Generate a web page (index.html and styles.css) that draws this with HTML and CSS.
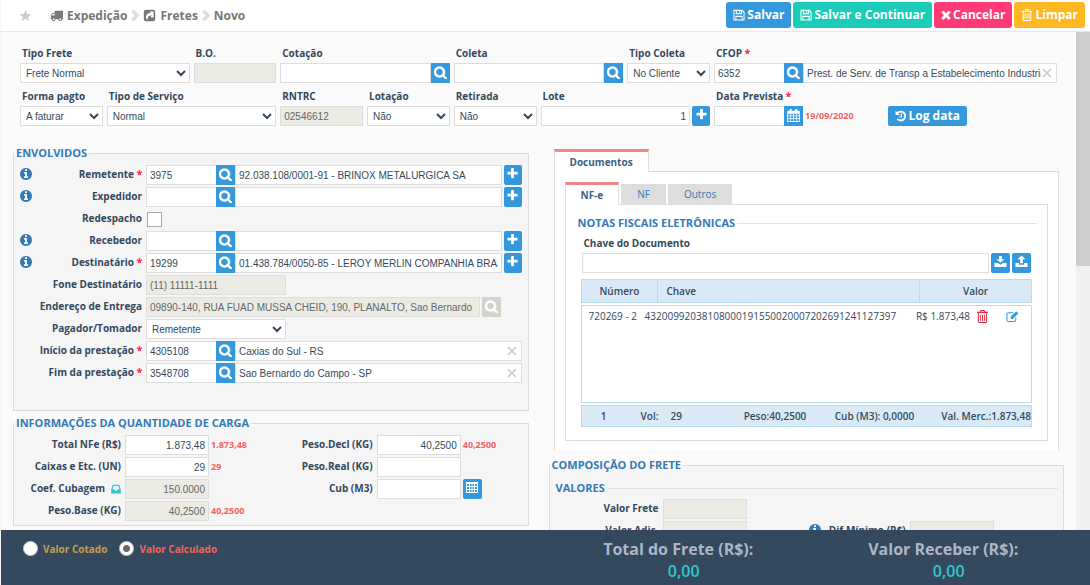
FILE: index.html
```html
<!DOCTYPE html>
<html lang="pt-BR">
<head>
<meta charset="utf-8">
<title>Expedição - Fretes - Novo</title>
<link rel="stylesheet" href="styles.css">
</head>
<body>
<svg class="sprite" aria-hidden="true">
  <symbol id="i-search" viewBox="64 64 1664 1664"><path stroke="currentColor" stroke-width="60" d="M1216 832q0-185-131.500-316.500t-316.500-131.500-316.500 131.500-131.500 316.500 131.500 316.500 316.500 131.500 316.500-131.500 131.500-316.500zm512 832q0 52-38 90t-90 38q-54 0-90-38l-343-342q-179 124-399 124-143 0-273.500-55.500t-225-150-150-225-55.500-273.500 55.500-273.500 150-225 225-150 273.500-55.500 273.500 55.500 225 150 150 225 55.500 273.500q0 220-124 399l343 343q37 37 37 90z"/></symbol>
  <symbol id="i-plus" viewBox="0 0 1792 1792"><path d="M1600 736v192q0 40-28 68t-68 28h-416v416q0 40-28 68t-68 28h-192q-40 0-68-28t-28-68v-416h-416q-40 0-68-28t-28-68v-192q0-40 28-68t68-28h416v-416q0-40 28-68t68-28h192q40 0 68 28t28 68v416h416q40 0 68 28t28 68z"/></symbol>
  <symbol id="i-info" viewBox="128 128 1536 1536"><path d="M1152 1376v-160q0-14-9-23t-23-9h-96v-512q0-14-9-23t-23-9h-320q-14 0-23 9t-9 23v160q0 14 9 23t23 9h96v320h-96q-14 0-23 9t-9 23v160q0 14 9 23t23 9h448q14 0 23-9t9-23zm-128-896v-160q0-14-9-23t-23-9h-192q-14 0-23 9t-9 23v160q0 14 9 23t23 9h192q14 0 23-9t9-23zm640 416q0 209-103 385.500t-279.500 279.500-385.500 103-385.500-103-279.500-279.500-103-385.500 103-385.500 279.500-279.500 385.500-103 385.500 103 279.500 279.500 103 385.500z"/></symbol>
  <symbol id="i-times" viewBox="260 260 1270 1330"><path d="M1490 1322q0 40-28 68l-136 136q-28 28-68 28t-68-28l-294-294-294 294q-28 28-68 28t-68-28l-136-136q-28-28-28-68t28-68l294-294-294-294q-28-28-28-68t28-68l136-136q28-28 68-28t68 28l294 294 294-294q28-28 68-28t68 28l136 136q28 28 28 68t-28 68l-294 294 294 294q28 28 28 68z"/></symbol>
  <symbol id="i-cross" viewBox="0 0 10 10"><path d="M1 1l8 8M9 1l-8 8" fill="none" stroke="currentColor" stroke-width="1.700"/></symbol>
  <symbol id="i-truck" viewBox="0 0 1792 1792"><path d="M640 1408q0-52-38-90t-90-38-90 38-38 90 38 90 90 38 90-38 38-90zm-384-512h384v-256h-158q-13 0-22 9l-195 195q-9 9-9 22v30zm1280 512q0-52-38-90t-90-38-90 38-38 90 38 90 90 38 90-38 38-90zm256-1088v1024q0 15-4 26.500t-13.500 18.500-16.500 11.500-23.500 6-22.500 2-25.500 0-22.500-.5q0 106-75 181t-181 75-181-75-75-181h-384q0 106-75 181t-181 75-181-75-75-181h-64q-3 0-22.500.5t-25.500 0-22.500-2-23.500-6-16.500-11.500-13.500-18.500-4-26.500q0-26 19-45t45-19v-320q0-8-.5-35t0-38 2.500-34.500 6.500-37 14-30.500 22.500-30l198-198q19-19 50.500-32t58.500-13h160v-192q0-26 19-45t45-19h1024q26 0 45 19t19 45z"/></symbol>
  <symbol id="i-star" viewBox="0 0 16 16"><path d="M8 1l2 5 5.500.3-4.300 3.400 1.500 5.300L8 12l-4.700 3 1.500-5.300L.5 6.300 6 6z"/></symbol>
  <symbol id="i-chevron" viewBox="0 0 10 14"><path d="M2.200 2l5 5-5 5" fill="none" stroke="currentColor" stroke-width="3.800"/></symbol>
  <symbol id="i-share" viewBox="0 0 16 16"><path fill-rule="evenodd" d="M3.500 1h9A2.500 2.500 0 0 1 15 3.500v9a2.500 2.500 0 0 1-2.500 2.500h-9A2.500 2.500 0 0 1 1 12.500v-9A2.500 2.500 0 0 1 3.500 1zM8 3l1.600 1.600C5.500 5 3.500 7.600 3.600 10c.1 1.700 1.300 2.800 2.700 3-1.300-2.600.5-5 4.700-5L9.400 9.600l.9.900H13V3z"/></symbol>
  <symbol id="i-save" viewBox="0 0 14 14"><path fill-rule="evenodd" d="M1 1h10l2.500 2.500V13.500H.5V1zM1.700 2.200v10.100h1.100V8h8.400v4.300h1.100V4l-1.800-1.800V6H3.200V2.200zM4.500 2.200v2.600h4.700V2.200zM4 9.200v3.100h6V9.200z"/><path d="M7 2.200h1.400v2H7z"/></symbol>
  <symbol id="i-trash" viewBox="0 0 12 14"><path fill-rule="evenodd" d="M4 0h4l1 2h3v1.300h-1V12.500A1.500 1.500 0 0 1 9.500 14h-7A1.500 1.500 0 0 1 1 12.500V3.300H0V2h3zM4.500 1.100L4.100 2h3.800l-.4-.9zM2.100 3.300v9.500h7.800V3.300zM3.200 5h1v6.500h-1zM5.500 5h1v6.500h-1zM7.800 5h1v6.500h-1z"/></symbol>
  <symbol id="i-history" viewBox="0 0 14 14"><path d="M2.600 3.800A5.200 5.200 0 1 1 2.700 10.400" fill="none" stroke="currentColor" stroke-width="2.200"/><path d="M.6.8v5h5z"/><path d="M7.500 4v3.800H5" fill="none" stroke="currentColor" stroke-width="1.300"/></symbol>
  <symbol id="i-calendar" viewBox="0 0 14 14"><path fill-rule="evenodd" d="M3 0h2v2h4V0h2v2h2a.8.8 0 0 1 .8.8V13.200a.8.8 0 0 1-.8.800H1a.8.8 0 0 1-.8-.8V2.800A.8.8 0 0 1 1 2h2zM1.200 5v2h2.400V5zM4.400 5v2h2.200V5zM7.400 5v2h2.200V5zM10.400 5v2h2.400V5zM1.200 7.800v2h2.400v-2zM4.400 7.800v2h2.200v-2zM7.400 7.800v2h2.200v-2zM10.400 7.800v2h2.400v-2zM1.200 10.600v2.200h2.400v-2.200zM4.400 10.600v2.200h2.200v-2.200zM7.400 10.600v2.200h2.200v-2.200zM10.400 10.600v2.200h2.400v-2.200z"/></symbol>
  <symbol id="i-table" viewBox="0 0 12 11"><path fill-rule="evenodd" d="M0 0h12v11H0zM1 2v2h2V2zM4 2v2h1.600V2zM6.500 2v2H8V2zM9 2v2h2V2zM1 5v2h2V5zM4 5v2h1.600V5zM6.500 5v2H8V5zM9 5v2h2V5zM1 8v2h2V8zM4 8v2h1.600V8zM6.500 8v2H8V8zM9 8v2h2V8z"/></symbol>
  <symbol id="i-download" viewBox="0 0 14 14"><path d="M5.500 1h3v3.500h2.700L7 8.400 2.800 4.500h2.700z"/><path d="M.5 8.500h3.800L7 10.500l2.700-2h3.800V13H.5z"/></symbol>
  <symbol id="i-upload" viewBox="0 0 14 14"><path d="M7 .6l4.300 4.100H8.500V9h-3V4.700H2.700z"/><path d="M.5 8.500h3.700v2h5.600v-2h3.700V13H.5z"/></symbol>
  <symbol id="i-edit" viewBox="0 0 14 14"><path d="M10.500 8v2.800a1.500 1.500 0 0 1-1.500 1.500H2.500A1.500 1.500 0 0 1 1 10.800V4.500A1.500 1.500 0 0 1 2.500 3H8" fill="none" stroke="currentColor" stroke-width="1.100"/><path d="M5 7.300L11 1.300l2.300 2.300-6 6H5z"/></symbol>
  <symbol id="i-inbox" viewBox="0 0 12 12"><path fill-rule="evenodd" d="M2 1h8l1.800 5.500V11.500H.2V6.500zM3 2.400L2 6.700h2.200L5 8.200h2l.8-1.500H10L9 2.400z"/></symbol>
</svg>

<header class="topbar">
  <button class="star" aria-label="Favorito"><svg class="icon"><use href="#i-star"/></svg></button>
  <nav class="crumbs">
    <a href="#"><svg class="icon"><use href="#i-truck"/></svg>Expedição</a>
    <svg class="sep"><use href="#i-chevron"/></svg>
    <a href="#"><svg class="icon"><use href="#i-share"/></svg>Fretes</a>
    <svg class="sep"><use href="#i-chevron"/></svg>
    <span>Novo</span>
  </nav>
  <div class="actions">
    <button class="btn blue"><svg class="icon"><use href="#i-save"/></svg>Salvar</button>
    <button class="btn teal"><svg class="icon"><use href="#i-save"/></svg>Salvar e Continuar</button>
    <button class="btn pink"><svg class="icon small"><use href="#i-times"/></svg>Cancelar</button>
    <button class="btn amber"><svg class="icon"><use href="#i-trash"/></svg>Limpar</button>
  </div>
</header>

<div class="viewport">
<main class="content">
  <form class="head-form">
    <div class="field w2"><label for="tf">Tipo Frete</label><select id="tf"><option>Frete Normal</option></select></div>
    <div class="field"><label for="bo">B.O.</label><input id="bo" disabled></div>
    <div class="field w2"><label for="cot">Cotação</label><div class="group"><input id="cot"><button type="button" class="find" aria-label="Buscar cotação"><svg><use href="#i-search"/></svg></button></div></div>
    <div class="field w2"><label for="col">Coleta</label><div class="group"><input id="col"><button type="button" class="find" aria-label="Buscar coleta"><svg><use href="#i-search"/></svg></button></div></div>
    <div class="field"><label for="tc">Tipo Coleta</label><select id="tc"><option>No Cliente</option></select></div>
    <div class="field w4"><label for="cfop">CFOP <b class="req">*</b></label><div class="group"><input id="cfop" class="code" value="6352"><button type="button" class="find" aria-label="Buscar CFOP"><svg><use href="#i-search"/></svg></button><div class="clearable"><input aria-label="Descrição CFOP" value="Prest. de Serv. de Transp a Estabelecimento Industrialização"><button type="button" class="clear" aria-label="Apagar"><svg><use href="#i-cross"/></svg></button></div></div></div>

    <div class="field"><label for="fp">Forma pagto</label><select id="fp"><option>A faturar</option></select></div>
    <div class="field w2"><label for="ts">Tipo de Serviço</label><select id="ts"><option>Normal</option></select></div>
    <div class="field"><label for="rn">RNTRC</label><input id="rn" value="02546612" disabled></div>
    <div class="field"><label for="lo">Lotação</label><select id="lo"><option>Não</option></select></div>
    <div class="field"><label for="re">Retirada</label><select id="re"><option>Não</option></select></div>
    <div class="field w2"><label for="lt">Lote</label><div class="group"><input id="lt" class="num" value="1"><button type="button" class="add" aria-label="Adicionar lote"><svg><use href="#i-plus"/></svg></button></div></div>
    <div class="field w2"><label for="dp">Data Prevista <b class="req">*</b></label><div class="group"><input id="dp" class="code"><button type="button" class="find" aria-label="Calendário"><svg><use href="#i-calendar"/></svg></button><output class="hint">19/09/2020</output></div></div>
    <div class="field log"><button type="button" class="btn blue"><svg class="icon"><use href="#i-history"/></svg>Log data</button></div>
  </form>

  <div class="columns">
    <div class="left">
      <fieldset class="box parties">
        <legend>ENVOLVIDOS</legend>
        <div class="rows">
        <div class="row"><svg class="info"><use href="#i-info"/></svg><label for="rem">Remetente <b class="req">*</b></label><div class="group"><input id="rem" class="code" value="3975"><button class="find" aria-label="Buscar"><svg><use href="#i-search"/></svg></button><input aria-label="Nome do remetente" value="92.038.108/0001-91 - BRINOX METALURGICA SA"><button class="add" aria-label="Adicionar"><svg><use href="#i-plus"/></svg></button></div></div>
        <div class="row"><svg class="info"><use href="#i-info"/></svg><label for="exp">Expedidor</label><div class="group"><input id="exp" class="code"><button class="find" aria-label="Buscar"><svg><use href="#i-search"/></svg></button><input aria-label="Nome do expedidor"><button class="add" aria-label="Adicionar"><svg><use href="#i-plus"/></svg></button></div></div>
        <div class="row"><label for="red">Redespacho</label><input type="checkbox" id="red"></div>
        <div class="row"><svg class="info"><use href="#i-info"/></svg><label for="rec">Recebedor</label><div class="group"><input id="rec" class="code"><button class="find" aria-label="Buscar"><svg><use href="#i-search"/></svg></button><input aria-label="Nome do recebedor"><button class="add" aria-label="Adicionar"><svg><use href="#i-plus"/></svg></button></div></div>
        <div class="row"><svg class="info"><use href="#i-info"/></svg><label for="des">Destinatário <b class="req">*</b></label><div class="group"><input id="des" class="code" value="19299"><button class="find" aria-label="Buscar"><svg><use href="#i-search"/></svg></button><input aria-label="Nome do destinatário" value="01.438.784/0050-85 - LEROY MERLIN COMPANHIA BRASILEIRA"><button class="add" aria-label="Adicionar"><svg><use href="#i-plus"/></svg></button></div></div>
        <div class="row"><label for="fon">Fone Destinatário</label><input id="fon" class="mid" value="(11) 11111-1111" disabled></div>
        <div class="row"><label for="end">Endereço de Entrega</label><div class="group address"><input id="end" value="09890-140, RUA FUAD MUSSA CHEID, 190, PLANALTO, Sao Bernardo" disabled><button class="find off" aria-label="Buscar" disabled><svg><use href="#i-search"/></svg></button></div></div>
        <div class="row"><label for="pag">Pagador/Tomador</label><select id="pag" class="mid"><option>Remetente</option></select></div>
        <div class="row"><label for="ini">Início da prestação <b class="req">*</b></label><div class="group"><input id="ini" class="code" value="4305108"><button class="find" aria-label="Buscar"><svg><use href="#i-search"/></svg></button><div class="clearable"><input aria-label="Município de início" value="Caxias do Sul - RS"><button class="clear" aria-label="Apagar"><svg><use href="#i-cross"/></svg></button></div></div></div>
        <div class="row"><label for="fim">Fim da prestação <b class="req">*</b></label><div class="group"><input id="fim" class="code" value="3548708"><button class="find" aria-label="Buscar"><svg><use href="#i-search"/></svg></button><div class="clearable"><input aria-label="Município de fim" value="Sao Bernardo do Campo - SP"><button class="clear" aria-label="Apagar"><svg><use href="#i-cross"/></svg></button></div></div></div>
        </div>
      </fieldset>

      <fieldset class="box cargo">
        <legend>INFORMAÇÕES DA QUANTIDADE DE CARGA</legend>
        <div class="cargo-grid">
        <div class="qty"><label for="q1">Total NFe (R$)</label><input id="q1" class="num" value="1.873,48"><output class="hint">1.873,48</output></div>
        <div class="qty"><label for="q2">Peso.Decl (KG)</label><input id="q2" class="num" value="40,2500"><output class="hint">40,2500</output></div>
        <div class="qty"><label for="q3">Caixas e Etc. (UN)</label><input id="q3" class="num" value="29"><output class="hint">29</output></div>
        <div class="qty"><label for="q4">Peso.Real (KG)</label><input id="q4" class="num"></div>
        <div class="qty"><label for="q5">Coef. Cubagem <svg class="inbox"><use href="#i-inbox"/></svg></label><input id="q5" class="num" value="150.0000" disabled></div>
        <div class="qty"><label for="q6">Cub (M3)</label><input id="q6" class="num"><button class="add wide" aria-label="Tabela de cubagem"><svg><use href="#i-table"/></svg></button></div>
        <div class="qty"><label for="q7">Peso.Base (KG)</label><input id="q7" class="num" value="40,2500" disabled><output class="hint">40,2500</output></div>
        </div>
      </fieldset>
    </div>

    <div class="right">
      <section class="docs">
        <div class="tabs main-tabs"><button class="tab on">Documentos</button></div>
        <div class="panel open">
          <div class="tabs"><button class="tab on">NF-e</button><button class="tab">NF</button><button class="tab">Outros</button></div>
          <div class="panel inner">
            <fieldset class="line">
              <legend>NOTAS FISCAIS ELETRÔNICAS</legend>
              <div class="field key"><label for="ch">Chave do Documento</label><div class="group"><input id="ch"><button class="add wide" aria-label="Baixar"><svg><use href="#i-download"/></svg></button><button class="add wide" aria-label="Enviar"><svg><use href="#i-upload"/></svg></button></div></div>
              <table class="notes">
                <thead><tr><th>Número</th><th class="start">Chave</th><th>Valor</th></tr></thead>
                <tbody><tr><td>720269 - 2</td><td>43200992038108000191550020007202691241127397</td><td class="value">R$ 1.873,48</td><td><button class="link danger" aria-label="Excluir"><svg><use href="#i-trash"/></svg></button></td><td><button class="link" aria-label="Editar"><svg><use href="#i-edit"/></svg></button></td></tr></tbody>
                <tfoot><tr><td class="mid-text">1</td><td class="indent">Vol:</td><td>29</td><td>Peso:40,2500</td><td>Cub (M3): 0,0000</td><td class="value">Val. Merc.:1.873,48</td></tr></tfoot>
              </table>
            </fieldset>
          </div>
        </div>
      </section>

      <fieldset class="box freight">
        <legend>COMPOSIÇÃO DO FRETE</legend>
        <div class="freight-body">
        <fieldset class="line">
          <legend>VALORES</legend>
          <div class="values">
            <div class="qty"><label for="v1">Valor Frete</label><input id="v1" disabled></div>
            <div class="qty"></div>
            <div class="qty"><label for="v2">Valor Adic.</label><input id="v2" disabled></div>
            <div class="qty"><label for="v3"><svg class="info"><use href="#i-info"/></svg>Dif.Mínimo (R$)</label><input id="v3" disabled></div>
          </div>
        </fieldset>
        </div>
      </fieldset>
    </div>
  </div>
</main>
<div class="scrollbar"><div class="thumb"></div></div>
</div>

<footer class="totals">
  <div class="modes">
    <label class="quoted"><input type="radio" name="modo">Valor Cotado</label>
    <label class="computed"><input type="radio" name="modo" checked>Valor Calculado</label>
  </div>
  <div class="total"><span>Total do Frete (R$):</span><strong>0,00</strong></div>
  <div class="total"><span>Valor Receber (R$):</span><strong>0,00</strong></div>
</footer>
</body>
</html>
```
FILE: styles.css
```css
* { box-sizing: border-box; }
body {
  margin: 0;
  height: 100vh;
  display: flex;
  flex-direction: column;
  overflow: hidden;
  border-left: 1px solid #f3f7fb;
  background: #fff;
  color: #34495e;
  font: 10px/14px "Open Sans", sans-serif;
}
.sprite { position: absolute; width: 0; height: 0; }
svg { fill: currentColor; display: block; flex: none; }
button { font: inherit; color: inherit; border: 0; background: none; padding: 0; margin: 0; cursor: pointer; }
fieldset { margin: 0; padding: 0; border: 0; min-width: 0; }

/* top bar */
.topbar {
  flex: none;
  height: 32px;
  display: flex;
  align-items: center;
  padding: 0 5px 0 18px;
  border-bottom: 1px solid #e4e8ec;
}
.star { color: #ccc; margin-right: 18px; }
.star .icon { width: 13px; height: 13px; }
.crumbs { display: flex; align-items: center; gap: 3px; color: #777; font-size: 12px; font-weight: 700; }
.crumbs a { display: flex; align-items: center; gap: 4px; color: inherit; text-decoration: none; }
.crumbs .icon { width: 13px; height: 13px; }
.sep { width: 10px; height: 13px; color: #ddd; }
.actions { margin-left: auto; display: flex; gap: 2px; padding-bottom: 1px; }
.btn {
  height: 26px;
  display: flex;
  align-items: center;
  gap: 2px;
  padding: 0 7px;
  border-radius: 3px;
  color: #fff;
  font-size: 12px;
  font-weight: 700;
  white-space: nowrap;
}
.btn .icon { width: 12px; height: 12px; }
.btn .small { width: 10px; height: 10px; }
.blue { background: #3598dc; }
.teal { background: #1bccb8; }
.pink { background: #ff3a77; }
.amber { background: #ffb822; }

/* scrolling area */
.viewport { flex: 1; min-height: 0; display: flex; background: #fafafa; }
.content { flex: 1; min-width: 0; overflow: hidden; padding-top: 12px; }
.scrollbar { width: 14px; background: #f0f0f0; }
.thumb { height: 47%; background: #cdcdcd; }

/* controls */
input, select {
  width: 100%;
  min-width: 0;
  height: 20px;
  margin: 0;
  border: 1px solid #ddd;
  border-radius: 0;
  background: #fff;
  color: #34495e;
  font: 10px/14px "Liberation Sans", Arial, sans-serif;
}
input { padding: 1px 3px; }
select { padding: 0 0 0 1px; }
input:disabled { background: #ebebe4; color: #666; }
.num { text-align: right; }
label { font-weight: 700; }
.req { color: #ff2d55; }
.group { display: flex; min-width: 0; }
.group .code { width: 71px; flex: none; margin-right: -1px; }
.find {
  flex: none;
  width: 19px;
  height: 20px;
  display: flex;
  justify-content: center;
  padding-top: 3px;
  background: #3598dc;
  color: #fff;
}
.find svg { width: 13px; height: 13px; }
.off { background: #d4d3cb; }
.add {
  flex: none;
  width: 18px;
  height: 20px;
  margin-left: 2px;
  display: flex;
  justify-content: center;
  padding-top: 2px;
  border-radius: 2px;
  background: #3598dc;
  color: #fff;
}
.wide { width: 19px; }
.add svg { width: 13px; height: 13px; }
.clearable { position: relative; flex: 1; min-width: 0; }
.clearable input { padding-right: 15px; }
.clear { position: absolute; right: 5px; top: 5px; color: #ccc; }
.clear svg { width: 10px; height: 10px; }
.hint { color: #f2635f; font-size: 9px; font-weight: 700; line-height: 19px; padding-left: 2px; }

/* heading form */
.head-form { display: grid; grid-template-columns: repeat(12, minmax(0, 1fr)); gap: 4px; padding: 0 19px; }
.field { display: flex; flex-direction: column; min-width: 0; }
.field label { height: 19px; padding-left: 2px; line-height: 19px; white-space: nowrap; }
.w2 { grid-column: span 2; }
.w4 { grid-column: span 4; }
.log { align-items: flex-start; justify-content: flex-end; }
.log .btn { height: 20px; border-radius: 2px; }

/* two columns */
.columns { display: grid; grid-template-columns: minmax(0, 1fr) minmax(0, 1fr); gap: 20px; padding: 18px 12px 0; }
legend { padding: 0 2px; margin: 0; color: #337ab7; font-size: 11px; line-height: 18px; font-weight: 700; }
.box { border: 1px solid #d9dcdf; background: #f5f5f5; }
.rows { padding: 3px 6px 27px; display: grid; gap: 2px; }
.row { display: grid; grid-template-columns: 12px 110px minmax(0, 1fr); height: 20px; }
.row label { grid-column: 2; text-align: right; line-height: 19px; white-space: nowrap; }
.row > :last-child { grid-column: 3; margin-left: 4px; }
.info { width: 12px; height: 12px; color: #337ab7; margin-top: 3px; }
.row .mid { width: 140px; }
.address { width: 355px; gap: 2px; }
.row input[type="checkbox"] {
  appearance: none;
  width: 15px;
  height: 15px;
  margin: 3px 0 0 5px;
  padding: 0;
  border: 1px solid #aaa;
}
.cargo { margin-top: 3px; }
.cargo-grid {
  padding: 3px 8px 4px 2px;
  display: grid;
  grid-template-columns: 1fr 1fr;
  gap: 2px 0;
}
.qty { display: flex; height: 20px; }
.qty label { display: flex; justify-content: flex-end; gap: 6px; width: 105px; line-height: 19px; margin-right: 4px; white-space: nowrap; }
.qty input { width: 84px; flex: none; }
.inbox { width: 10px; height: 10px; margin-top: 5px; color: #36c6d3; }
.qty .add svg { width: 12px; height: 11px; margin-top: 1px; }

/* documents */
.docs { padding: 5px 5px 0; }
.tabs { display: flex; align-items: flex-end; gap: 2px; }
.tab { height: 20px; padding: 0 16px; background: #ddd; color: #337ab7; }
.tab.on {
  height: 23px;
  margin-bottom: -1px;
  padding: 0 15px;
  border: 1px solid #ddd;
  border-top: 3px solid #f08784;
  border-bottom: 0;
  background: #fff;
  color: #3f5f80;
  font-weight: 700;
  position: relative;
}
.panel { border: 1px solid #ddd; background: #fff; }
.open { border-bottom: 0; padding: 10px 10px 9px; }
.inner { padding: 9px 10px 13px; }
.line { border-top: 1px solid #dce4ec; }
.key { padding: 2px 6px 0; }
.notes { display: grid; gap: 2px; margin: 6px 5px 0; }
.notes thead, .notes tbody, .notes tfoot { display: block; border: 1px solid #b7dcef; }
.notes tr { display: grid; }
.notes th, .notes td { padding: 0; white-space: nowrap; }
.notes thead, .notes tfoot { background: #d9eaf6; }
.notes thead tr { grid-template-columns: 76fr 262fr 112fr; line-height: 22px; }
.notes th { font-weight: 600; }
.notes th + th { border-left: 1px solid #b7dcef; }
.start { text-align: left; }
.notes .start { padding-left: 8px; }
.notes tbody { height: 98px; padding: 3px 6px 3px 7px; }
.notes tbody tr { grid-template-columns: 56fr 257fr 68fr 30fr 25fr; line-height: 15px; }
.notes tfoot tr { grid-template-columns: 44fr 45fr 73fr 91fr 90fr 106fr; line-height: 20px; font-weight: 600; }
.value { text-align: right; }
.mid-text { text-align: center; }
.notes .indent { padding-left: 15px; }
.link { display: block; margin: 1px 0 0 6px; color: #3598dc; }
.link.danger { color: #e7263f; }
.link svg { width: 13px; height: 13px; }

/* freight values */
.freight { margin-top: 6px; }
.freight-body { padding: 5px 5px 4px 4px; }
.values { display: grid; grid-template-columns: 1fr 1fr; gap: 2px 0; padding: 2px 10px 20px 0; }
.values .info { margin-top: 3px; margin-right: 2px; }

/* totals bar */
.totals { flex: none; height: 55px; display: grid; grid-template-columns: 546fr 265fr 266fr; padding-right: 14px; background: #34495e; }
.modes { display: flex; gap: 12px; padding: 11px 0 0 22px; }
.modes label { display: flex; gap: 5px; height: 16px; line-height: 16px; white-space: nowrap; }
.quoted { color: #c49f4e; }
.computed { color: #f2635f; }
.modes input { appearance: none; width: 15px; height: 15px; padding: 0; border: 1px solid #ccc; border-radius: 50%; }
.modes input:checked { background: radial-gradient(circle, #666 3px, #fff 4px); }
.total { display: grid; justify-items: center; align-content: start; padding-top: 8px; font-size: 16px; line-height: 22px; font-weight: 700; color: #adb7c3; }
.total strong { color: #2fc5d2; font-weight: 600; padding-left: 11px; }
```
